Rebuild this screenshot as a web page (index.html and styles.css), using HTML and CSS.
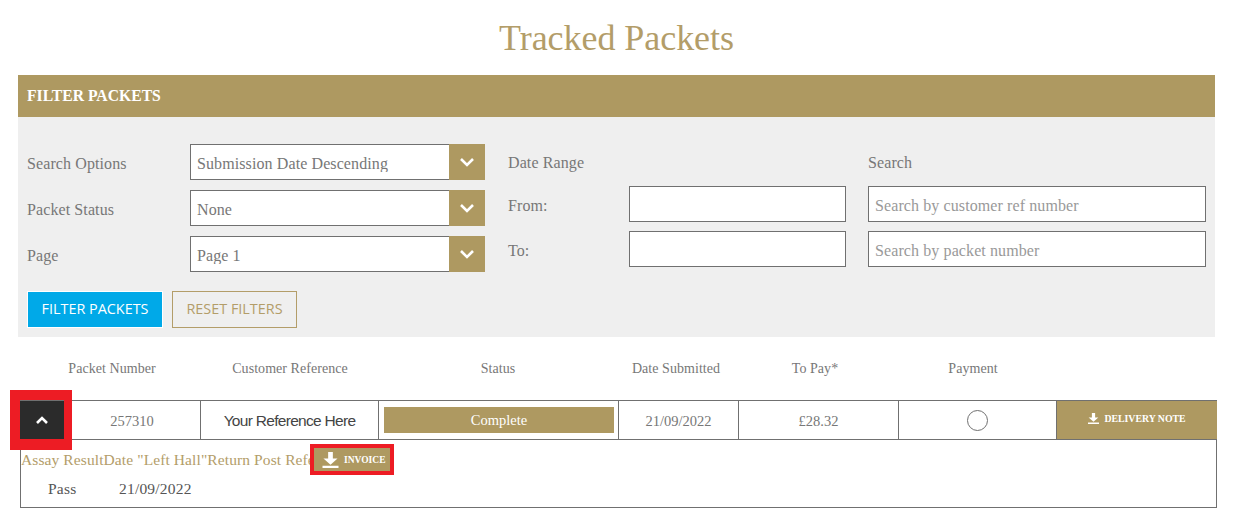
FILE: index.html
```html
<!DOCTYPE html>
<html lang="en">
	<head>
		<meta charset="UTF-8" />
		<meta name="viewport" content="width=device-width, initial-scale=1.0" />
		<title>Tracked Packets</title>
		<link rel="stylesheet" href="styles.css">
	</head>
	<body>
		<h1 class="pageTitle">Tracked Packets</h1>

		<section class="filterPanel">
			<h2 class="filterHead">FILTER PACKETS</h2>
			<div class="filterBody">
				<div class="filterCols">
					<div class="colOptions">
						<div class="selectRow">
							<label for="searchOptions">Search Options</label>
							<div class="selectBox">
								<select id="searchOptions"><option>Submission Date Descending</option></select>
								<span class="selectArrow"><svg width="16" height="10" viewBox="0 0 16 10"><path d="M2 2l6 6 6-6" fill="none" stroke="#fff" stroke-width="2.6"/></svg></span>
							</div>
						</div>
						<div class="selectRow">
							<label for="packetStatus">Packet Status</label>
							<div class="selectBox">
								<select id="packetStatus"><option>None</option></select>
								<span class="selectArrow"><svg width="16" height="10" viewBox="0 0 16 10"><path d="M2 2l6 6 6-6" fill="none" stroke="#fff" stroke-width="2.6"/></svg></span>
							</div>
						</div>
						<div class="selectRow">
							<label for="page">Page</label>
							<div class="selectBox">
								<select id="page"><option>Page 1</option></select>
								<span class="selectArrow"><svg width="16" height="10" viewBox="0 0 16 10"><path d="M2 2l6 6 6-6" fill="none" stroke="#fff" stroke-width="2.6"/></svg></span>
							</div>
						</div>
					</div>
					<div class="colDates">
						<div class="colTitle">Date Range</div>
						<div class="dateRow">
							<label for="from">From:</label>
							<input type="text" id="from" />
						</div>
						<div class="dateRow">
							<label for="to">To:</label>
							<input type="text" id="to" />
						</div>
					</div>
					<div class="colSearch">
						<div class="colTitle">Search</div>
						<input type="text" placeholder="Search by customer ref number" />
						<input type="text" placeholder="Search by packet number" />
					</div>
				</div>
				<div class="filterBtns">
					<button class="btn btnBlue">FILTER PACKETS</button>
					<button class="btn btnOutline">RESET FILTERS</button>
				</div>
			</div>
		</section>

		<div class="packets">
			<div class="packetHead">
				<div>Packet Number</div>
				<div>Customer Reference</div>
				<div>Status</div>
				<div>Date Submitted</div>
				<div>To Pay*</div>
				<div>Payment</div>
			</div>
			<div class="packetRow">
				<div class="cell cellToggle">
					<button class="toggle">
						<svg width="14" height="9" viewBox="0 0 14 9"><path d="M2 7l5-5 5 5" fill="none" stroke="#fff" stroke-width="2.6"/></svg>
					</button>
					<span class="markToggle"></span>
				</div>
				<div class="cell cellNumber">257310</div>
				<div class="cell cellRef">Your Reference Here</div>
				<div class="cell cellStatus"><span class="statusBadge">Complete</span></div>
				<div class="cell">21/09/2022</div>
				<div class="cell">£28.32</div>
				<div class="cell"><span class="radio"></span></div>
				<div class="cell cellNote">
					<svg width="11" height="11" viewBox="0 0 17 17"><path d="M6 0h5v7h5l-7.500 6.500L1 7h5zM0 14.500h17V17H0z" fill="#fff"/></svg>
					DELIVERY NOTE
				</div>
			</div>
			<div class="packetDetail">
				<div class="detailHead">
					<div class="detailTitle">Assay ResultDate "Left Hall"Return Post Reference</div>
					<button class="invoiceBtn">
						<svg width="17" height="16" viewBox="0 0 17 17"><path d="M6 0h5v7h5l-7.500 6.500L1 7h5zM0 14.500h17V17H0z" fill="#fff"/></svg>
						INVOICE
					</button>
				</div>
				<div class="detailRow">
					<span class="detailResult">Pass</span>
					<span>21/09/2022</span>
				</div>
			</div>
		</div>
	</body>
</html>
```

FILE: styles.css
```css
* {
	padding: 0;
	margin: 0;
	box-sizing: border-box;
}
body {
	font-family: "Liberation Serif", serif;
	font-size: 16px;
	color: #777;
	background: #fff;
}
.pageTitle {
	height: 75px;
	padding-top: 15px;
	padding-right: 12px;
	font-size: 36px;
	font-weight: normal;
	letter-spacing: -0.05px;
	line-height: 46px;
	text-align: center;
	color: #b39d69;
}
.filterPanel {
	width: 1197px;
	margin-left: 18px;
	background: #efefef;
}
.filterHead {
	height: 42px;
	padding-left: 9px;
	font-size: 15.700px;
	line-height: 41px;
	color: #fff;
	background: #ae9961;
}
.filterBody {
	height: 220px;
	padding: 27px 9px 0 9px;
}
.filterCols {
	display: flex;
	height: 147px;
	letter-spacing: 0.1px;
}
.colOptions {
	display: flex;
	flex-direction: column;
	gap: 10px;
	width: 458px;
}
.selectRow {
	display: flex;
	align-items: center;
}
.selectRow label {
	width: 163px;
	padding-top: 4px;
}
.selectBox {
	display: flex;
	width: 295px;
	height: 36px;
}
.selectBox select {
	flex: 1;
	min-width: 0;
	padding: 2px 0 0 6px;
	appearance: none;
	border: 1px solid #707070;
	border-right: 0;
	border-radius: 0;
	background: #fff;
	font: inherit;
	letter-spacing: inherit;
	color: #777;
}
.selectArrow {
	display: flex;
	align-items: center;
	justify-content: center;
	width: 36px;
	background: #ae9961;
}
.colDates {
	width: 338px;
	margin-left: 23px;
}
.colSearch {
	display: flex;
	flex-direction: column;
	gap: 9px;
	width: 338px;
	margin-left: 22px;
}
.colTitle {
	height: 33px;
	line-height: 38px;
}
.colDates .colTitle {
	margin-bottom: 9px;
}
.dateRow {
	display: flex;
	align-items: center;
	margin-bottom: 9px;
}
.dateRow label {
	width: 121px;
	padding-top: 4px;
}
input[type="text"] {
	height: 36px;
	padding: 3px 0 0 6px;
	border: 1px solid #707070;
	background: #fff;
	font: inherit;
	letter-spacing: inherit;
}
.dateRow input {
	width: 217px;
}
input::placeholder {
	color: #999;
	opacity: 1;
}
.filterBtns {
	display: flex;
	gap: 9px;
}
.btn {
	height: 37px;
	padding-bottom: 2px;
	font-family: "Open Sans", sans-serif;
	font-size: 14.400px;
}
.btnBlue {
	width: 136px;
	border: 1px solid #fff;
	background: #00a9e8;
	color: #fff;
}
.btnOutline {
	width: 125px;
	border: 1px solid #b39d69;
	background: transparent;
	color: #b39d69;
}
.packets {
	width: 1197px;
	margin-left: 20px;
}
.packetHead {
	display: grid;
	grid-template-columns: 184px 172px 244px 112px 166px 150px;
	height: 63px;
	font-size: 14px;
	letter-spacing: 0.05px;
	line-height: 64px;
	text-align: center;
}
.packetRow {
	display: grid;
	grid-template-columns: 44px 136px 178px 240px 120px 160px 158px 161px;
	height: 40px;
	border: 1px solid #707070;
	border-left: 0;
}
.cell {
	display: flex;
	align-items: center;
	justify-content: center;
	padding-top: 2px;
	border-left: 1px solid #707070;
	font-size: 14.500px;
}
.cellToggle {
	position: relative;
	padding-top: 0;
	border-left: 0;
	align-items: stretch;
}
.cellNumber {
	border-left: 0;
}
.toggle {
	width: 100%;
	border: 0;
	background: #2b2b2b;
}
.markToggle {
	position: absolute;
	top: -11px;
	left: -10px;
	right: -8px;
	bottom: -11px;
	border: solid #ed1c24;
	border-width: 10px 8px 11px 10px;
}
.cellRef {
	font-family: "Liberation Sans", sans-serif;
	font-size: 15.500px;
	letter-spacing: -0.7px;
	color: #444;
}
.cellStatus {
	padding: 0 4px 0 5px;
}
.statusBadge {
	width: 100%;
	height: 26px;
	font-size: 14.500px;
	line-height: 27px;
	text-align: center;
	color: #fff;
	background: #ae9961;
}
.radio {
	width: 21px;
	height: 21px;
	margin-top: -2px;
	border: 1px solid #707070;
	border-radius: 50%;
}
.cellNote {
	gap: 5px;
	padding: 0 0 3px 0;
	font-size: 9.800px;
	font-weight: bold;
	color: #fff;
	background: #ae9961;
}
.packetDetail {
	height: 68px;
	border: 1px solid #707070;
	border-top: 0;
}
.detailHead {
	display: flex;
	align-items: center;
	height: 32px;
	padding-top: 7px;
}
.detailTitle {
	width: 289px;
	margin-right: 4px;
	overflow: hidden;
	white-space: nowrap;
	font-size: 15.500px;
	letter-spacing: 0.1px;
	color: #b39d69;
}
.invoiceBtn {
	display: flex;
	align-items: center;
	gap: 5px;
	width: 76px;
	height: 23px;
	padding-left: 8px;
	outline: 4px solid #ed1c24;
	border: 0;
	background: #ae9961;
	font-family: "Liberation Serif", serif;
	font-size: 9.500px;
	font-weight: bold;
	color: #fff;
}
.detailRow {
	display: flex;
	padding: 8px 0 0 27px;
	font-size: 15.500px;
	letter-spacing: 0.2px;
	color: #555;
}
.detailResult {
	width: 71px;
}
```
